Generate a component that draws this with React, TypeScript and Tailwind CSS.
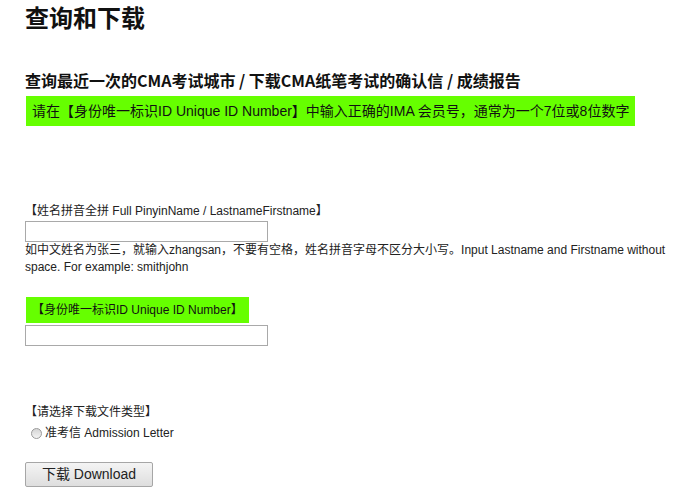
const font = {
  fontFamily: '"Liberation Sans", Arial, "Noto Sans CJK SC", sans-serif',
};

const App = () => {
  return (
    <div className="min-h-screen bg-white pl-[25px] text-[#222]" style={font}>
      <h1
        className="text-[24px] font-bold leading-[34px] text-[#111]"
        style={{ fontFamily: '"Noto Sans CJK SC", sans-serif' }}
      >
        查询和下载
      </h1>

      <h2
        className="mt-[34px] text-[16px] font-bold leading-[24px] text-[#111]"
        style={{ fontFamily: '"Noto Sans CJK SC", sans-serif' }}
      >
        查询最近一次的CMA考试城市 / 下载CMA纸笔考试的确认信 / 成绩报告
      </h2>

      <div className="mt-[4px] ml-[1px] inline-block bg-[#66ff00] px-[6px] text-[14px] leading-[30px] text-[#111]">
        请在【身份唯一标识ID Unique ID Number】中输入正确的IMA 会员号，通常为一个7位或8位数字
      </div>

      {/* pinyin name */}
      <div className="mt-[77px] text-[12px] leading-[16px]">
        【姓名拼音全拼 Full PinyinName / LastnameFirstname】
      </div>
      <input
        type="text"
        className="mt-[2px] block h-[21px] w-[243px] border border-[#a9a9a9] bg-white px-1 text-[12px] outline-none"
      />
      <p className="pr-[8px] text-[12px] leading-[17px]">
        如中文姓名为张三，就输入zhangsan，不要有空格，姓名拼音字母不区分大小写。Input Lastname and Firstname without
        space. For example: smithjohn
      </p>

      {/* unique id */}
      <div className="mt-[21px] ml-[1px] inline-block bg-[#66ff00] pl-[6px] pr-[6px] text-[12px] leading-[26px] text-[#111]">
        【身份唯一标识ID Unique ID Number】
      </div>
      <input
        type="text"
        className="mt-[2px] block h-[21px] w-[243px] border border-[#a9a9a9] bg-white px-1 text-[12px] outline-none"
      />

      {/* file type */}
      <div className="mt-[58px] text-[12px] leading-[16px]">【请选择下载文件类型】</div>
      <label className="mt-[4px] flex items-center text-[12px] leading-[18px]">
        <span className="ml-[6px] mr-[3px] inline-block h-[11px] w-[11px] rounded-full border border-[#9a9a9a] bg-gradient-to-b from-[#d4d4d4] to-[#f4f4f4]" />
        准考信 Admission Letter
      </label>

      <button className="mt-[20px] block h-[25px] w-[128px] rounded-[2px] border border-[#a6a6a6] bg-gradient-to-b from-[#f4f4f4] to-[#dedede] text-[14px] leading-[23px] text-[#222]">
        下载 Download
      </button>
    </div>
  );
};

export default App;
